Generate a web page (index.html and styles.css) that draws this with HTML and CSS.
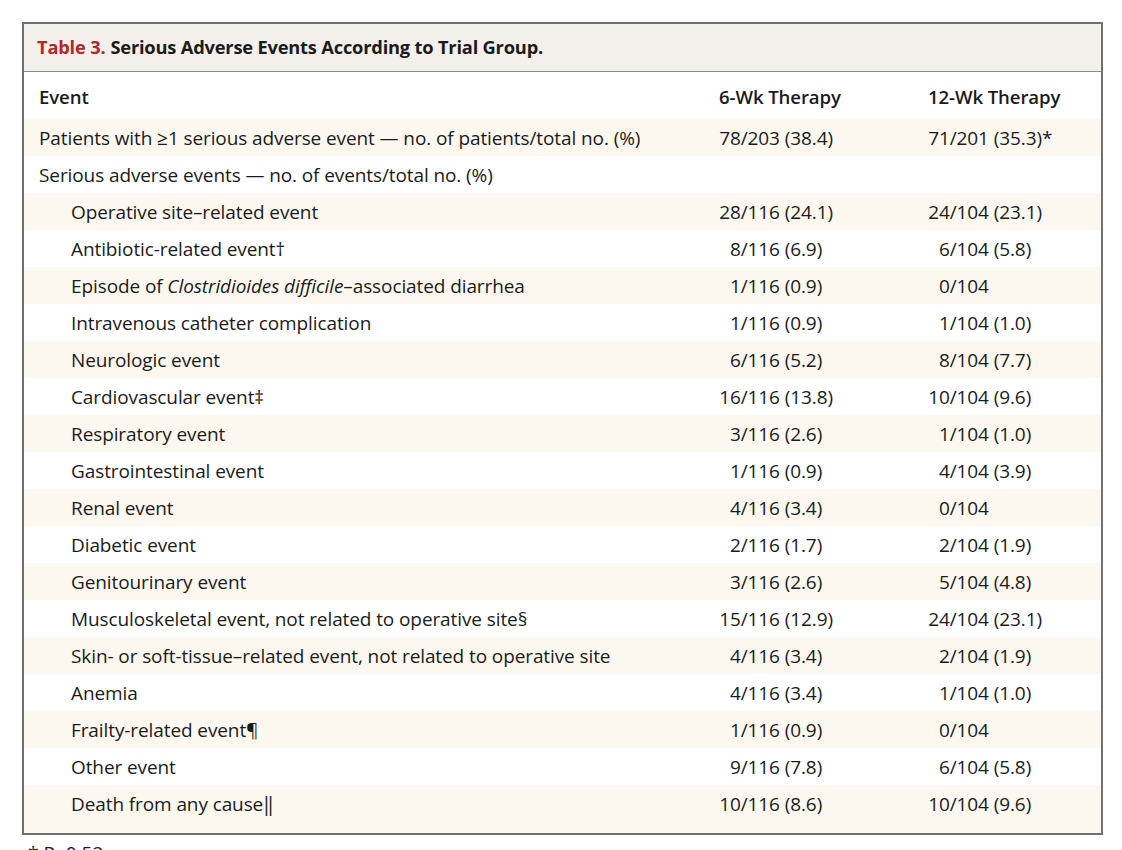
FILE: index.html
```html
<!DOCTYPE html>
<html lang="en">
<head>
<meta charset="utf-8">
<title>Table 3. Serious Adverse Events According to Trial Group.</title>
<link rel="stylesheet" href="styles.css">
</head>
<body>
<div class="page">
  <section class="table-box">
    <header class="table-title"><span class="label">Table 3.</span> Serious Adverse Events According to Trial Group.</header>
    <table class="data">
      <colgroup><col class="c-event"><col class="c-six"><col class="c-twelve"></colgroup>
      <thead>
        <tr><th>Event</th><th>6-Wk Therapy</th><th>12-Wk Therapy</th></tr>
      </thead>
      <tbody>
        <tr class="alt"><td>Patients with ≥1 serious adverse event — no. of patients/total no. (%)</td><td><span class="n">78</span>/203 (38.4)</td><td><span class="n">71</span>/201 (35.3)*</td></tr>
        <tr><td>Serious adverse events — no. of events/total no. (%)</td><td></td><td></td></tr>
        <tr class="alt"><td class="sub">Operative site–related event</td><td><span class="n">28</span>/116 (24.1)</td><td><span class="n">24</span>/104 (23.1)</td></tr>
        <tr><td class="sub">Antibiotic-related event†</td><td><span class="n">8</span>/116 (6.9)</td><td><span class="n">6</span>/104 (5.8)</td></tr>
        <tr class="alt"><td class="sub">Episode of <i>Clostridioides difficile</i>–associated diarrhea</td><td><span class="n">1</span>/116 (0.9)</td><td><span class="n">0</span>/104</td></tr>
        <tr><td class="sub">Intravenous catheter complication</td><td><span class="n">1</span>/116 (0.9)</td><td><span class="n">1</span>/104 (1.0)</td></tr>
        <tr class="alt"><td class="sub">Neurologic event</td><td><span class="n">6</span>/116 (5.2)</td><td><span class="n">8</span>/104 (7.7)</td></tr>
        <tr><td class="sub">Cardiovascular event‡</td><td><span class="n">16</span>/116 (13.8)</td><td><span class="n">10</span>/104 (9.6)</td></tr>
        <tr class="alt"><td class="sub">Respiratory event</td><td><span class="n">3</span>/116 (2.6)</td><td><span class="n">1</span>/104 (1.0)</td></tr>
        <tr><td class="sub">Gastrointestinal event</td><td><span class="n">1</span>/116 (0.9)</td><td><span class="n">4</span>/104 (3.9)</td></tr>
        <tr class="alt"><td class="sub">Renal event</td><td><span class="n">4</span>/116 (3.4)</td><td><span class="n">0</span>/104</td></tr>
        <tr><td class="sub">Diabetic event</td><td><span class="n">2</span>/116 (1.7)</td><td><span class="n">2</span>/104 (1.9)</td></tr>
        <tr class="alt"><td class="sub">Genitourinary event</td><td><span class="n">3</span>/116 (2.6)</td><td><span class="n">5</span>/104 (4.8)</td></tr>
        <tr><td class="sub">Musculoskeletal event, not related to operative site§</td><td><span class="n">15</span>/116 (12.9)</td><td><span class="n">24</span>/104 (23.1)</td></tr>
        <tr class="alt"><td class="sub">Skin- or soft-tissue–related event, not related to operative site</td><td><span class="n">4</span>/116 (3.4)</td><td><span class="n">2</span>/104 (1.9)</td></tr>
        <tr><td class="sub">Anemia</td><td><span class="n">4</span>/116 (3.4)</td><td><span class="n">1</span>/104 (1.0)</td></tr>
        <tr class="alt"><td class="sub">Frailty-related event¶</td><td><span class="n">1</span>/116 (0.9)</td><td><span class="n">0</span>/104</td></tr>
        <tr><td class="sub">Other event</td><td><span class="n">9</span>/116 (7.8)</td><td><span class="n">6</span>/104 (5.8)</td></tr>
        <tr class="alt last"><td class="sub">Death from any cause‖</td><td><span class="n">10</span>/116 (8.6)</td><td><span class="n">10</span>/104 (9.6)</td></tr>
      </tbody>
    </table>
  </section>
  <p class="footnote">* P=0.52.</p>
</div>
</body>
</html>
```

FILE: styles.css
```css
html, body {
  margin: 0;
  padding: 0;
  background: #ffffff;
}

body {
  font-family: "Open Sans", "Noto Sans", "DejaVu Sans", sans-serif;
  color: #1b1b1b;
  overflow: hidden;
}

.page {
  padding: 22px 19px 0 22px;
}

.table-box {
  border: 2px solid #707070;
  background: #ffffff;
}

.table-title {
  background: #f3f0eb;
  border-bottom: 1px solid #8a8a8a;
  height: 48px;
  display: flex;
  align-items: center;
  padding-left: 13px;
  padding-bottom: 2px;
  box-sizing: border-box;
  font-size: 18.3px;
  font-weight: 700;
  color: #1b1b1b;
  letter-spacing: -0.2px;
}

.table-title .label {
  color: #b3262c;
  margin-right: 5px;
}

.data {
  width: 100%;
  border-collapse: collapse;
  table-layout: fixed;
  font-size: 19px;
  letter-spacing: -0.1px;
}

.c-event { width: 695px; }
.c-six { width: 209px; }
.c-twelve { width: auto; }

.data th {
  text-align: left;
  font-weight: 600;
  font-size: 18.6px;
  height: 45px;
  padding: 2px 0 0 0;
  vertical-align: middle;
  white-space: nowrap;
}

.data th:first-child,
.data td:first-child {
  padding-left: 15px;
}

.data td {
  height: 37px;
  padding: 0;
  vertical-align: middle;
  white-space: nowrap;
}

.data td.sub {
  padding-left: 47px;
}

.data tr.alt td {
  background: #fcf8ef;
}

.data tr.last td {
  padding-bottom: 11px;
}

.data .n {
  display: inline-block;
  width: 2ch;
  text-align: right;
}

.footnote {
  margin: 6px 0 0 6px;
  font-size: 19px;
  line-height: 24px;
  color: #1b1b1b;
}
```
